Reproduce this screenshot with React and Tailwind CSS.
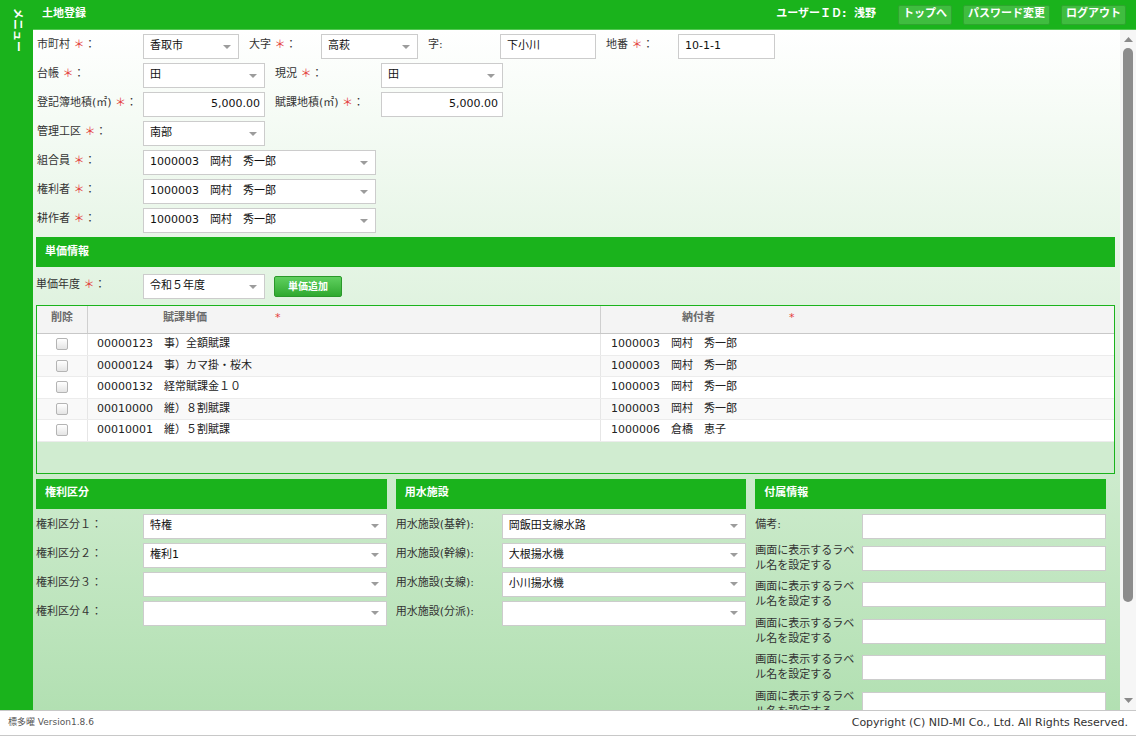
import React from "react";

const FONT = "font-['DejaVu_Sans','Noto_Sans_CJK_JP',sans-serif]";

function Caret() {
  return (
    <svg width="8" height="5" viewBox="0 0 8 5" className="absolute right-[7px] top-1/2 -translate-y-1/2">
      <path d="M0 0.5h8L4 4.5z" fill="#9c9c9c" />
    </svg>
  );
}

function Sel({ w, value }) {
  return (
    <div className={`relative h-[25px] ${w} shrink-0 bg-white border border-[#cccccc] flex items-center pl-[6px] text-[11px] text-[#111] whitespace-pre`}>
      {value}
      <Caret />
    </div>
  );
}

function Inp({ w, value, right }) {
  return (
    <div className={`h-[25px] ${w} shrink-0 bg-white border border-[#cccccc] flex items-center text-[11px] text-[#111] whitespace-pre ${right ? "justify-end pr-[4px]" : "pl-[6px]"}`}>
      {value}
    </div>
  );
}

function Lbl({ w, children, req, ml }) {
  return (
    <div className={`${w} ${ml || ""} shrink-0 pt-[3px] leading-[16px] text-[11px] text-[#333] whitespace-nowrap`}>
      {children}
      {req && (
        <>
          {" "}
          <span className="text-[#e43c3c]">＊</span>：
        </>
      )}
    </div>
  );
}

function SectionHeader({ children }) {
  return (
    <div className="h-[30px] bg-[#1ab31c] flex items-center pl-[9px] text-white font-bold text-[11px]">{children}</div>
  );
}

function Checkbox() {
  return <div className="w-[12px] h-[12px] rounded-[2px] border border-[#b4b4b4] bg-gradient-to-b from-white to-[#e4e4e4]" />;
}

const rows = [
  ["00000123　事）全額賦課", "1000003　岡村　秀一郎"],
  ["00000124　事）カマ掛・桜木", "1000003　岡村　秀一郎"],
  ["00000132　経常賦課金１０", "1000003　岡村　秀一郎"],
  ["00010000　維）８割賦課", "1000003　岡村　秀一郎"],
  ["00010001　維）５割賦課", "1000006　倉橋　恵子"],
];

const HBtn = ({ children }) => (
  <div className="h-[20px] px-[4px] flex items-center rounded-[2px] border border-[#2ea62e] bg-[#3fbd3f] text-white font-bold text-[11px]">
    {children}
  </div>
);

export default function App() {
  const member = "1000003　岡村　秀一郎";
  return (
    <div className={`${FONT} w-[1136px] h-[736px] flex flex-col overflow-hidden bg-white`}>
      <div className="flex flex-1 min-h-0">
        {/* sidebar */}
        <div className="w-[33px] shrink-0 bg-[#1ab31c] flex justify-center pt-[8px] pl-[2px]">
          <div className="[writing-mode:vertical-rl] [text-orientation:sideways] text-white font-bold text-[11px] leading-[11px]">
            メニュー
          </div>
        </div>
        <div className="flex-1 flex flex-col min-w-0">
          {/* header */}
          <div className="h-[30px] shrink-0 bg-[#1ab31c] border-b border-[#52c852] flex items-center pl-[9px] pr-[10px]">
            <div className="text-white font-bold text-[11px]">土地登録</div>
            <div className="flex-1" />
            <div className="text-white font-bold text-[11px] mr-[22px]">ユーザーＩＤ:&nbsp;&nbsp;浅野</div>
            <div className="flex gap-[11px]">
              <HBtn>トップへ</HBtn>
              <HBtn>パスワード変更</HBtn>
              <HBtn>ログアウト</HBtn>
            </div>
          </div>
          {/* content + scrollbar */}
          <div className="flex flex-1 min-h-0">
            <div className="flex-1 min-w-0 overflow-hidden bg-gradient-to-b from-[#ffffff] to-[#b2e0b2] pl-[3px] pr-[5px] pt-[4px]">
              <div className="flex flex-col gap-[4px]">
                <div className="flex pl-[1px]">
                  <Lbl w="w-[106px]" req>市町村</Lbl>
                  <Sel w="w-[96px]" value="香取市" />
                  <Lbl w="w-[72px]" ml="ml-[10px]" req>大字</Lbl>
                  <Sel w="w-[97px]" value="高萩" />
                  <Lbl w="w-[72px]" ml="ml-[10px]">字:</Lbl>
                  <Inp w="w-[96px]" value="下小川" />
                  <Lbl w="w-[72px]" ml="ml-[10px]" req>地番</Lbl>
                  <Inp w="w-[97px]" value="10-1-1" />
                </div>
                <div className="flex pl-[1px]">
                  <Lbl w="w-[106px]" req>台帳</Lbl>
                  <Sel w="w-[122px]" value="田" />
                  <Lbl w="w-[106px]" ml="ml-[10px]" req>現況</Lbl>
                  <Sel w="w-[122px]" value="田" />
                </div>
                <div className="flex pl-[1px]">
                  <Lbl w="w-[106px]" req>登記簿地積(㎡)</Lbl>
                  <Inp w="w-[122px]" value="5,000.00" right />
                  <Lbl w="w-[106px]" ml="ml-[10px]" req>賦課地積(㎡)</Lbl>
                  <Inp w="w-[122px]" value="5,000.00" right />
                </div>
                <div className="flex pl-[1px]">
                  <Lbl w="w-[106px]" req>管理工区</Lbl>
                  <Sel w="w-[122px]" value="南部" />
                </div>
                <div className="flex pl-[1px]">
                  <Lbl w="w-[106px]" req>組合員</Lbl>
                  <Sel w="w-[233px]" value={member} />
                </div>
                <div className="flex pl-[1px]">
                  <Lbl w="w-[106px]" req>権利者</Lbl>
                  <Sel w="w-[233px]" value={member} />
                </div>
                <div className="flex pl-[1px]">
                  <Lbl w="w-[106px]" req>耕作者</Lbl>
                  <Sel w="w-[233px]" value={member} />
                </div>
              </div>

              <div className="mt-[4px]">
                <SectionHeader>単価情報</SectionHeader>
              </div>

              <div className="mt-[7px] flex items-start">
                <Lbl w="w-[107px]" req>単価年度</Lbl>
                <Sel w="w-[122px]" value="令和５年度" />
                <div className="ml-[9px] mt-[2px] h-[21px] w-[68px] flex items-center justify-center rounded-[2px] border border-[#2a982a] bg-gradient-to-b from-[#5fd05f] to-[#2ea92e] text-white font-bold text-[10px]">
                  単価追加
                </div>
              </div>

              {/* table */}
              <div className="mt-[6px] border border-[#1ab31c] bg-[#d0ecd0]">
                <div className="h-[28px] flex bg-[#f4f4f4] border-b border-[#c8c8c8] text-[11px] font-bold text-[#6a6a6a]">
                  <div className="w-[51px] shrink-0 flex items-center justify-center border-r border-[#cfcfcf] pb-[2px]">削除</div>
                  <div className="w-[513px] shrink-0 flex items-center border-r border-[#cfcfcf] pb-[2px]">
                    <span className="ml-[75px]">賦課単価</span>
                    <span className="ml-[68px] text-[#e43c3c] font-normal">*</span>
                  </div>
                  <div className="flex-1 flex items-center pb-[2px]">
                    <span className="ml-[81px]">納付者</span>
                    <span className="ml-[74px] text-[#e43c3c] font-normal">*</span>
                  </div>
                </div>
                {rows.map((r, i) => (
                  <div key={i} className={`h-[21.5px] flex border-b border-[#ececec] text-[11px] text-[#222] ${i % 2 === 1 ? "bg-[#f9f9f9]" : "bg-white"}`}>
                    <div className="w-[51px] shrink-0 flex items-center justify-center border-r border-[#e6e6e6]">
                      <Checkbox />
                    </div>
                    <div className="w-[513px] shrink-0 flex items-center pl-[9px] border-r border-[#e6e6e6] whitespace-pre">{r[0]}</div>
                    <div className="flex-1 flex items-center pl-[10px] whitespace-pre">{r[1]}</div>
                  </div>
                ))}
                <div className="h-[31px]" />
              </div>

              {/* bottom three */}
              <div className="mt-[5px] grid grid-cols-3">
                <div className="pr-[9px]">
                  <SectionHeader>権利区分</SectionHeader>
                  <div className="mt-[5px] flex flex-col gap-[4px]">
                    {[["権利区分１：", "特権"], ["権利区分２：", "権利1"], ["権利区分３：", ""], ["権利区分４：", ""]].map(([l, v], i) => (
                      <div key={i} className="flex">
                        <Lbl w="w-[107px]">{l}</Lbl>
                        <Sel w="flex-1" value={v} />
                      </div>
                    ))}
                  </div>
                </div>
                <div className="pr-[9px]">
                  <SectionHeader>用水施設</SectionHeader>
                  <div className="mt-[5px] flex flex-col gap-[4px]">
                    {[["用水施設(基幹):", "岡飯田支線水路"], ["用水施設(幹線):", "大根揚水機"], ["用水施設(支線):", "小川揚水機"], ["用水施設(分派):", ""]].map(([l, v], i) => (
                      <div key={i} className="flex">
                        <Lbl w="w-[106px]">{l}</Lbl>
                        <Sel w="flex-1" value={v} />
                      </div>
                    ))}
                  </div>
                </div>
                <div className="pr-[9px]">
                  <SectionHeader>付属情報</SectionHeader>
                  <div className="mt-[5px] flex flex-col gap-[4px]">
                    <div className="flex">
                      <Lbl w="w-[107px]">備考:</Lbl>
                      <Inp w="flex-1" value="" />
                    </div>
                    {[0, 1, 2, 3, 4].map((i) => (
                      <div key={i} className="flex items-start h-[32.5px] shrink-0">
                        <div className="w-[107px] shrink-0 text-[11px] leading-[15px] text-[#333]">
                          画面に表示するラベル名を設定する
                        </div>
                        <div className="flex-1 mt-[3px] h-[25px] bg-white border border-[#cccccc]" />
                      </div>
                    ))}
                  </div>
                </div>
              </div>
            </div>
            {/* scrollbar */}
            <div className="w-[16px] shrink-0 bg-[#f6f6f6] flex flex-col items-center">
              <svg width="9" height="5" viewBox="0 0 9 5" className="mt-[7px]">
                <path d="M0 5h9L4.5 0z" fill="#8a8a8a" />
              </svg>
              <div className="mt-[6px] w-[10px] h-[554px] rounded-full bg-[#8c8c8c]" />
              <div className="flex-1" />
              <svg width="9" height="5" viewBox="0 0 9 5" className="mb-[7px]">
                <path d="M0 0h9L4.5 5z" fill="#8a8a8a" />
              </svg>
            </div>
          </div>
        </div>
      </div>
      {/* footer */}
      <div className="h-[26px] shrink-0 bg-white border-t border-b border-[#c8c8c8] flex items-center justify-between pl-[8px] pr-[8px]">
        <div className="text-[9px] text-[#555]">標多曜 Version1.8.6</div>
        <div className="text-[11px] text-[#333]">Copyright (C) NID-MI Co., Ltd. All Rights Reserved.</div>
      </div>
    </div>
  );
}
